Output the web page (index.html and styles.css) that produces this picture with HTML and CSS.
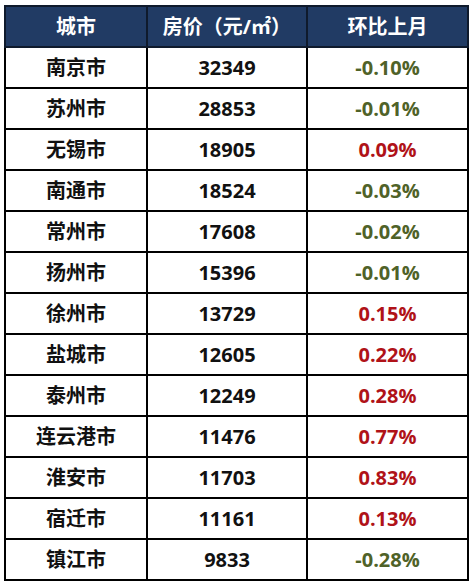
FILE: index.html
```html
<!DOCTYPE html>
<html lang="zh">
<head>
<meta charset="utf-8">
<link rel="stylesheet" href="styles.css">
</head>
<body>
<table class="price-table">
  <colgroup>
    <col class="c1"><col class="c2"><col class="c3">
  </colgroup>
  <thead>
    <tr><th>城市</th><th>房价（元/㎡）</th><th>环比上月</th></tr>
  </thead>
  <tbody>
    <tr><td>南京市</td><td>32349</td><td class="down">-0.10%</td></tr>
    <tr><td>苏州市</td><td>28853</td><td class="down">-0.01%</td></tr>
    <tr><td>无锡市</td><td>18905</td><td class="up">0.09%</td></tr>
    <tr><td>南通市</td><td>18524</td><td class="down">-0.03%</td></tr>
    <tr><td>常州市</td><td>17608</td><td class="down">-0.02%</td></tr>
    <tr><td>扬州市</td><td>15396</td><td class="down">-0.01%</td></tr>
    <tr><td>徐州市</td><td>13729</td><td class="up">0.15%</td></tr>
    <tr><td>盐城市</td><td>12605</td><td class="up">0.22%</td></tr>
    <tr><td>泰州市</td><td>12249</td><td class="up">0.28%</td></tr>
    <tr><td>连云港市</td><td>11476</td><td class="up">0.77%</td></tr>
    <tr><td>淮安市</td><td>11703</td><td class="up">0.83%</td></tr>
    <tr><td>宿迁市</td><td>11161</td><td class="up">0.13%</td></tr>
    <tr><td>镇江市</td><td>9833</td><td class="down">-0.28%</td></tr>
  </tbody>
</table>
</body>
</html>
```
FILE: styles.css
```css
html, body {
  margin: 0;
  padding: 0;
  background: #ffffff;
}
body {
  padding: 5px 0 0 4px;
  font-family: "Open Sans", "Noto Sans CJK SC", sans-serif;
}
.price-table {
  border-collapse: collapse;
  width: 463px;
  table-layout: fixed;
}
.c1 { width: 142px; }
.c2 { width: 160px; }
.c3 { width: 161px; }
.price-table th,
.price-table td {
  border: 2px solid #000;
  height: 39px;
  padding: 0;
  text-align: center;
  vertical-align: middle;
  font-size: 20px;
  font-weight: 700;
  line-height: 1;
  color: #111;
}
.price-table th {
  background: #213b64;
  color: #fff;
  border-color: #0f1a2c;
}
.price-table td.down { color: #4f6228; }
.price-table td.up { color: #b01218; }
```
